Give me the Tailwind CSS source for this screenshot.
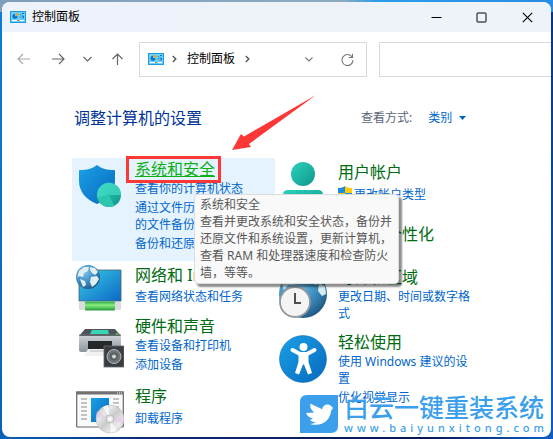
<!DOCTYPE html>
<html lang="zh-CN">
<head>
<meta charset="utf-8">
<title>控制面板</title>
<script src="https://cdn.jsdelivr.net/npm/@tailwindcss/browser@4"></script>
</head>
<body class="min-h-screen bg-[linear-gradient(100deg,#0b7fd8,#0a2d74_35%,#07194f_80%,#0b5fc8)] font-['Noto_Sans','Noto_Sans_CJK_SC',sans-serif] text-xs text-black">
<svg class="absolute size-0" aria-hidden="true">
  <defs>
    <linearGradient id="blue" x1="0" y1="0" x2="1" y2="1"><stop stop-color="#1ba1e6"/><stop offset="1" stop-color="#0668bd"/></linearGradient>
    <linearGradient id="teal" x1="0" y1="0" x2="1" y2="1"><stop stop-color="#2bd3bc"/><stop offset="1" stop-color="#10958a"/></linearGradient>
    <linearGradient id="screen" x1="0" y1="0" x2="1" y2="1"><stop stop-color="#39cce9"/><stop offset="1" stop-color="#0c68c3"/></linearGradient>
    <radialGradient id="earth" cx=".35" cy=".3" r=".8"><stop stop-color="#7cc4ea"/><stop offset=".6" stop-color="#3787bb"/><stop offset="1" stop-color="#1c4f77"/></radialGradient>
    <linearGradient id="metal" x1="0" y1="0" x2="0" y2="1"><stop stop-color="#cbd0d6"/><stop offset="1" stop-color="#8d949c"/></linearGradient>
    <linearGradient id="pipe" x1="0" y1="0" x2="0" y2="1"><stop stop-color="#28a745"/><stop offset=".4" stop-color="#8af07e"/><stop offset="1" stop-color="#25993b"/></linearGradient>
    <linearGradient id="disc" x1="0" y1="0" x2="1" y2="1"><stop stop-color="#b9bcbe"/><stop offset=".3" stop-color="#e9e9ea"/><stop offset=".5" stop-color="#c9cbcc"/><stop offset=".75" stop-color="#ececec"/><stop offset="1" stop-color="#b4b6b8"/></linearGradient>
    <symbol id="panel" viewBox="0 0 16 12">
      <rect x=".5" y=".5" width="15" height="11" fill="#6bd0f8" stroke="#1c9be0"/>
      <path d="M5 2.800a2.500 2.500 0 1 0 2.500 2.500H5z" fill="#0b6cc0"/><path d="M5.800 1.800v2.700h2.700A2.700 2.700 0 0 0 5.800 1.800z" fill="#f59a1c"/>
      <path d="M10 3.500h1m1-1h2M9.500 6h1m1-1h2v2h-2" stroke="#0b6cc0" fill="none" stroke-width=".9"/>
      <path d="M2 9.500h5" stroke="#fff"/><path d="M7 9.500h2" stroke="#f57c00"/><path d="M10 9.500h4" stroke="#fff"/>
    </symbol>
  </defs>
</svg>

<div class="flex min-h-screen flex-col bg-[linear-gradient(90deg,#7f9fb9,#8cabc1_62%,#2a9ee8_68%,#2a8be4)] bg-[length:100%_12px] bg-no-repeat px-[2px] pt-[2px] pb-[2px]">
<div class="relative flex grow flex-col overflow-hidden rounded-lg bg-white">
  <header class="flex h-[30px] shrink-0 items-center bg-[linear-gradient(90deg,#eef2fb,#edf3f8)] pl-2">
    <svg class="h-3 w-4"><use href="#panel"/></svg>
    <h1 class="ml-[6px] grow">控制面板</h1>
    <button class="flex h-full w-[45px] items-center justify-center" aria-label="最小化"><svg class="size-[11px]" viewBox="0 0 11 11"><path d="M.5 5.500h10" stroke="#000"/></svg></button>
    <button class="flex h-full w-[45px] items-center justify-center" aria-label="最大化"><svg class="size-[11px]" viewBox="0 0 11 11"><rect x="1" y="1" width="9" height="9" rx=".5" fill="none" stroke="#000"/></svg></button>
    <button class="flex h-full w-[47px] items-center justify-center" aria-label="关闭"><svg class="size-[11px]" viewBox="0 0 11 11"><path d="M.8.8l9.400 9.400M10.200.8L.8 10.200" stroke="#000" stroke-width="1.100"/></svg></button>
  </header>

  <nav class="flex h-[54px] shrink-0 items-center text-[#666]">
    <div class="flex shrink-0 items-center pl-[15px]">
      <button aria-label="后退"><svg class="h-3 w-[13px]" viewBox="0 0 13 12" fill="none" stroke="#aaa" stroke-width="1.200"><path d="M6 1L1 6l5 5M1 6h12"/></svg></button>
      <button class="ml-[22px]" aria-label="前进"><svg class="h-3 w-[13px]" viewBox="0 0 13 12" fill="none" stroke="#666" stroke-width="1.200"><path d="M7 1l5 5-5 5M12 6H0"/></svg></button>
      <button class="ml-[18px]" aria-label="最近的位置"><svg class="h-3 w-[9px]" viewBox="0 0 9 12" fill="none" stroke="#666" stroke-width="1.200"><path d="M.5 4l4 4 4-4"/></svg></button>
      <button class="ml-5" aria-label="上一级"><svg class="h-3 w-[11px]" viewBox="0 0 11 12" fill="none" stroke="#666" stroke-width="1.200"><path d="M.5 6l5-5 5 5M5.500 1v11"/></svg></button>
    </div>
    <div class="ml-4 flex h-[35px] w-[228px] shrink-0 items-center border border-[#d9d9d9] pl-2 text-black">
      <svg class="h-3 w-4"><use href="#panel"/></svg>
      <svg class="ml-2 h-2 w-[5px]" viewBox="0 0 5 8" fill="none" stroke="#555" stroke-width="1.400"><path d="M.8 1l3 3-3 3"/></svg>
      <a href="#" class="ml-[10px]">控制面板</a>
      <svg class="ml-[10px] h-2 w-[5px]" viewBox="0 0 5 8" fill="none" stroke="#555" stroke-width="1.400"><path d="M.8 1l3 3-3 3"/></svg>
      <button class="ml-auto" aria-label="历史地址"><svg class="h-2 w-2" viewBox="0 0 8 8" fill="none" stroke="#777" stroke-width="1.100"><path d="M.5 2.500L4 6l3.500-3.500"/></svg></button>
      <button class="mr-3 ml-7" aria-label="刷新"><svg class="size-[13px]" viewBox="0 0 13 13" fill="none" stroke="#777" stroke-width="1.100"><path d="M11.200 4.200A5.500 5.500 0 1 0 12 7M11.500.8v3.700H7.800"/></svg></button>
    </div>
    <input type="search" aria-label="搜索控制面板" class="ml-3 h-[35px] min-w-0 grow border border-r-0 border-[#d9d9d9] bg-white px-2">
  </nav>

  <main class="relative px-[70px] pt-5">
    <div class="flex h-6 items-center">
      <h2 class="ml-[2px] w-[287px] text-base leading-6 text-[#003399]">调整计算机的设置</h2>
      <span class="text-[#5a6478]">查看方式:</span>
      <button class="ml-4 flex items-center text-[#0066cc]">类别<svg class="ml-[7px] h-1 w-[7px]" viewBox="0 0 7 4"><path d="M0 0h7L3.500 4z" fill="#0066cc"/></svg></button>
    </div>

    <div class="mt-7 grid grid-cols-[203px_1fr] leading-[17px] text-[#0066cc]">
      <div class="flex flex-col">
        <section class="flex h-[103px] rounded-[2px] bg-[#e5f3ff] px-1 pt-[1px]">
          <svg class="mt-[3px] size-12 shrink-0" viewBox="0 0 48 48">
            <path d="M21 3c-5 4-10 5-17 5-.5 0-1 .5-1 1v10c0 10 6 18 18 23 12-5 18-13 18-23V9c0-.5-.5-1-1-1-7 0-12-1-17-5z" fill="url(#blue)"/>
            <circle cx="33" cy="33" r="12" fill="url(#teal)"/>
            <path d="M33 33L25 23.800a12 12 0 0 1 20 9.200zM33 33l-11.500 3a12 12 0 0 1 3.500-12z" fill="#48dfc7" opacity=".65"/><path d="M33 33l-11.500 3a12 12 0 0 0 17 7.700z" fill="#2cc5ad"/>
          </svg>
          <div class="ml-[11px] w-[140px]">
            <h3 class="text-base leading-5"><a href="#" class="relative text-[#0caf16] underline">系统和安全<span class="absolute -top-[2px] -left-[9px] h-[27px] w-[95px] border-3 border-[#fb3737]"></span></a></h3>
            <a href="#" class="mt-[1px] block">查看你的计算机状态</a>
            <a href="#" class="mt-[2px] block">通过文件历史记录保存你的文件备份副本</a>
            <a href="#" class="mt-[2px] block whitespace-nowrap">备份和还原(Win 7)</a>
          </div>
        </section>
        <section class="mt-1 flex px-1">
          <svg class="-mt-[2px] -mb-1 size-12 shrink-0" viewBox="0 0 48 48">
            <path d="M3 7h42v31H3z" fill="url(#screen)" stroke="#46606f" stroke-width=".8"/>
            <rect x="3" y="39" width="42" height="8" rx="1" fill="#d9dddf"/><rect x="9" y="38.500" width="30" height="9" rx="1" fill="url(#pipe)"/>
            <circle cx="12" cy="14" r="12" fill="url(#earth)"/>
            <path d="M3 8l5-4 5 0-1 4-4 2-1 4-4-1-2 2zM14 4l5 1 3 4-3 3-3-2-2-3zM15 14l6-1 2 3-3 5-4 3-2-5zM4 16l5 2 1 4-3 2z" fill="#e1eff2"/>
          </svg>
          <div class="ml-[11px]">
            <h3 class="text-base leading-5 whitespace-nowrap text-[#006b12]"><a href="#">网络和 Internet</a></h3>
            <a href="#" class="mt-[3px] block">查看网络状态和任务</a>
          </div>
        </section>
        <section class="mt-[9px] flex px-1">
          <svg class="mt-[9px] size-12 shrink-0" viewBox="0 0 48 48">
            <path d="M9 4h30l6 7v4H3v-4z" fill="#4d5358"/><path d="M16 5h16l1 4H14z" fill="#37d6b4"/>
            <path d="M3 11h42v14q0 2-2 2H5q-2 0-2-2z" fill="url(#metal)"/><path d="M3 10h42" stroke="#72777c"/><rect x="12" y="16" width="24" height="11" fill="#25282b"/>
            <path d="M12 24h24l3 7H8z" fill="#f1f1f1"/><path d="M14 26h18" stroke="#bbb"/><circle cx="41" cy="9" r="1" fill="#3ee43e"/>
            <rect x="28" y="21" width="20" height="21" fill="#393d41" stroke="#65696c" stroke-width=".8"/><circle cx="38" cy="31.500" r="7" fill="#6f7478" stroke="#b6babd"/><circle cx="38" cy="31.500" r="4" fill="#5a5f63"/><circle cx="38" cy="31.500" r="2" fill="#d3d5d6"/>
          </svg>
          <div class="ml-[11px]">
            <h3 class="text-base leading-5 text-[#006b12]"><a href="#">硬件和声音</a></h3>
            <a href="#" class="mt-[1px] block">查看设备和打印机</a>
            <a href="#" class="mt-[2px] block">添加设备</a>
          </div>
        </section>
        <section class="mt-[13px] flex px-1">
          <svg class="mt-[3px] -mb-2 size-12 shrink-0" viewBox="0 0 48 48">
            <rect x=".7" y="3" width="46.600" height="35" rx=".5" fill="#fafafa" stroke="#666" stroke-width="1.200"/><path d="M0 2.400h48v3H0z" fill="#717171"/><path d="M41 4h1m1 0h1m1 0h1" stroke="#fff"/>
            <path d="M5 10h6M5 14h6M5 18h6M5 22h6M5 26h6M5 30h6M37 10h6M37 14h6M37 18h6" stroke="#8a8a8a"/>
            <rect x="15" y="9" width="18" height="24" fill="url(#blue)"/>
            <circle cx="34" cy="30" r="14" fill="url(#disc)" stroke="#b1b1b1" stroke-width=".5"/><path d="M34 30L20 28l1-6zM34 30l14-2-1 7z" fill="#e5c7e6" opacity=".6"/><path d="M34 30L27 18l5-2zM34 30l7 12-6 2z" fill="#fff" opacity=".7"/>
            <circle cx="34" cy="30" r="4" fill="#e4e4e4" stroke="#aaa" stroke-width=".7"/><circle cx="34" cy="30" r="1.800" fill="#fff"/>
          </svg>
          <div class="ml-[11px]">
            <h3 class="text-base leading-5 text-[#006b12]"><a href="#">程序</a></h3>
            <a href="#" class="mt-[4px] block">卸载程序</a>
          </div>
        </section>
      </div>

      <div class="flex flex-col pl-1">
        <section class="mt-1 flex h-[62px]">
          <svg class="size-12 shrink-0" viewBox="0 0 48 48"><circle cx="24" cy="12" r="12" fill="url(#teal)"/><path d="M4 33q0-5 5-5h30q5 0 5 5c0 9-8 15-20 15S4 42 4 33z" fill="url(#teal)"/></svg>
          <div class="ml-[11px]">
            <h3 class="text-base leading-5 text-[#006b12]"><a href="#">用户帐户</a></h3>
            <a href="#" class="mt-[4px] flex"><svg class="mr-[2px] h-[15px] w-[14px]" viewBox="0 0 14 15"><path d="M7 0C5 1.500 3 2 0 2v5h7z" fill="#1c8ee0"/><path d="M7 0c2 1.500 4 2 7 2v5H7z" fill="#ffc90e"/><path d="M0 7h7v8C3 13.500 0 11 0 7z" fill="#ffc90e"/><path d="M14 7H7v8c4-1.500 7-4 7-8z" fill="#1c8ee0"/></svg>更改帐户类型</a>
          </div>
        </section>
        <section class="flex h-[43px] pl-[59px]">
          <h3 class="text-base leading-5 text-[#006b12]"><a href="#">外观和个性化</a></h3>
        </section>
        <section class="flex h-[65px]">
          <svg class="mt-[3px] size-12 shrink-0" viewBox="0 0 48 48">
            <circle cx="24" cy="24" r="24" fill="url(#earth)"/><path d="M3 14l7-8 8-3 4 4-5 3-2 5-6 0-4 5zM30 4l8 4 2 6-4 1-4-4z" fill="#d6edf0"/><path d="M40 13l6 3 1 8-4 2-4-5z" fill="#d6edf0"/>
            <circle cx="16" cy="32" r="15" fill="#f4f4f4" stroke="#92989c" stroke-width="1.800"/><path d="M16 23v10h6" fill="none" stroke="#505050" stroke-width="2"/>
          </svg>
          <div class="ml-[11px] w-[140px]">
            <h3 class="text-base leading-5 text-[#006b12]"><a href="#">时钟和区域</a></h3>
            <a href="#" class="mt-[1px] block">更改日期、时间或数字格式</a>
          </div>
        </section>
        <section class="flex">
          <svg class="mt-[3px] size-12 shrink-0" viewBox="0 0 48 48">
            <circle cx="24" cy="24" r="23.500" fill="url(#blue)" stroke="#0863ae" stroke-width=".5"/><circle cx="24.500" cy="12" r="4" fill="#fff"/>
            <path d="M13.500 15L21 19h7l7.500-4" fill="none" stroke="#fff" stroke-width="4" stroke-linecap="round" stroke-linejoin="round"/>
            <path d="M19.500 18h10v9l3.500 11-4 1.500-4-10h-1l-4 10-4-1.500 3.500-11z" fill="#fff"/>
          </svg>
          <div class="ml-[11px] w-[140px]">
            <h3 class="text-base leading-5 text-[#006b12]"><a href="#">轻松使用</a></h3>
            <a href="#" class="mt-[1px] block">使用 Windows 建议的设置</a>
            <a href="#" class="mt-[2px] block">优化视觉显示</a>
          </div>
        </section>
      </div>
    </div>

    <svg class="absolute top-2 left-[229px] h-[58px] w-[86px]" viewBox="0 0 86 58" aria-hidden="true"><path d="M85 1L13 42.500 10 40 1 56l19-3-2-3z" fill="#fb3737"/></svg>
    <div role="tooltip" class="absolute top-[108px] left-[192px] w-[205px] rounded-[4px] border border-[#dcdcdc] bg-[#f9f9f9] px-[5px] pt-[1px] pb-[2px] leading-[17px] text-[#575757] shadow-[3px_3px_2px_rgba(0,0,0,0.45)]">系统和安全<br>查看并更改系统和安全状态，备份并还原文件和系统设置，更新计算机，查看 RAM 和处理器速度和检查防火墙，等等。</div>
  </main>

  <aside class="absolute right-1 bottom-[2px] flex items-start text-[#3b9fec]">
    <svg class="mt-[2px] size-[38px]" viewBox="0 0 38 38"><path d="M7 0h31v31q0 7-7 7H0V7q0-7 7-7z" fill="#3b9fec"/><path d="M33 13c-1.500-1.500-3-3.500-5.500-3.500-3 0-5 2-5.500 5-1-1.500-7-3-11.500-6-1 4 1 7 4 9L6 18c1 3 4 5 7 5.500L10 25c2 2 4 2 6 2-2 1-4 2-6 2 10 3 20-2 21-13z" fill="#fff"/></svg>
    <div class="ml-[6px] w-[203px]">
      <p class="text-[25px] leading-7 font-medium whitespace-nowrap">白云一键重装系统</p>
      <p class="text-[11px] leading-[14px] font-medium tracking-[4px] whitespace-nowrap">www.baiyunxitong.com</p>
    </div>
  </aside>
</div>
</div>
</body>
</html>
